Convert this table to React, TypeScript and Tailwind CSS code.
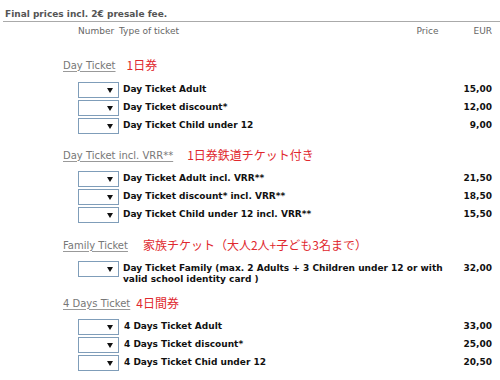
import React from 'react';

type Row = { label: string[]; price: string; shift?: boolean };
type Section = { title: string; jp: string; jpGap: string; top: string; rowsTop: string; rows: Row[] };

const sections: Section[] = [
  {
    title: 'Day Ticket',
    jp: '1日券',
    jpGap: 'ml-[11px]',
    top: 'mt-[20px]',
    rowsTop: 'mt-[10px]',
    rows: [
      { label: ['Day Ticket Adult'], price: '15,00' },
      { label: ['Day Ticket discount*'], price: '12,00' },
      { label: ['Day Ticket Child under 12'], price: '9,00' },
    ],
  },
  {
    title: 'Day Ticket incl. VRR**',
    jp: '1日券鉄道チケット付き',
    jpGap: 'ml-[14px]',
    top: 'mt-[12px]',
    rowsTop: 'mt-[9px]',
    rows: [
      { label: ['Day Ticket Adult incl. VRR**'], price: '21,50' },
      { label: ['Day Ticket discount* incl. VRR**'], price: '18,50' },
      { label: ['Day Ticket Child under 12 incl. VRR**'], price: '15,50' },
    ],
  },
  {
    title: 'Family Ticket',
    jp: '家族チケット（大人2人+子ども3名まで）',
    jpGap: 'ml-[15px]',
    top: 'mt-[13px]',
    rowsTop: 'mt-[9px]',
    rows: [
      {
        label: ['Day Ticket Family (max. 2 Adults + 3 Children under 12 or with', 'valid school identity card )'],
        price: '32,00',
      },
    ],
  },
  {
    title: '4 Days Ticket',
    jp: '4日間券',
    jpGap: 'ml-[6px]',
    top: 'mt-[11px]',
    rowsTop: 'mt-[9px]',
    rows: [
      { label: ['4 Days Ticket Adult'], price: '33,00', shift: true },
      { label: ['4 Days Ticket discount*'], price: '25,00', shift: true },
      { label: ['4 Days Ticket Chid under 12'], price: '20,50', shift: true },
    ],
  },
];

const font = "font-['DejaVu_Sans',Verdana,sans-serif]";

const Select = () => (
  <div className="w-[41px] h-[16px] border border-[#7f9db9] bg-white flex items-center justify-end pr-[5px] shrink-0">
    <svg width="6" height="5" viewBox="0 0 6 5">
      <polygon points="0,0 6,0 3,5" fill="#111" />
    </svg>
  </div>
);

const TicketRow = ({ row }: { row: Row }) => (
  <div className={`flex items-start pl-[78px] pr-[8px] ${row.label.length > 1 ? 'min-h-[24px]' : 'h-[18px]'}`}>
    <Select />
    <div className={`flex-1 ${row.shift ? 'ml-[5px]' : 'ml-[4px]'} text-[9px] font-bold text-[#111] leading-[11px] pt-[2px]`}>
      {row.label.map((l) => (
        <div key={l} className="whitespace-nowrap">{l}</div>
      ))}
    </div>
    <div className="text-[9px] font-bold text-[#111] leading-[11px] pt-[2px] text-right">{row.price}</div>
  </div>
);

export default function App() {
  return (
    <div className={`w-[500px] h-[380px] bg-white overflow-hidden ${font}`}>
      <div className="ml-[3px] border-b border-[#aaa] pt-[8px] pb-[1px] pl-[2px]">
        <div className="text-[9px] font-bold text-[#555] leading-[12px]">Final prices incl. 2€ presale fee.</div>
      </div>
      <div className="flex items-center pl-[78px] pr-[8px] mt-[3px] h-[13px] text-[9px] text-[#666]">
        <div className="w-[41px]">Number</div>
        <div className="flex-1">Type of ticket</div>
        <div className="w-[57px]">Price</div>
        <div>EUR</div>
      </div>

      {sections.map((s) => (
        <div key={s.title} className={s.top}>
          <div className="flex items-center pl-[63px] h-[14px]">
            <span className="text-[10px] text-[#777] underline underline-offset-2 decoration-[#999]">{s.title}</span>
            <span className={`${s.jpGap} text-[12px] text-[#e0282e] font-['Noto_Sans_CJK_JP',sans-serif] leading-[14px]`}>{s.jp}</span>
          </div>
          <div className={s.rowsTop}>
            {s.rows.map((r) => (
              <TicketRow key={r.label[0]} row={r} />
            ))}
          </div>
        </div>
      ))}
    </div>
  );
}
